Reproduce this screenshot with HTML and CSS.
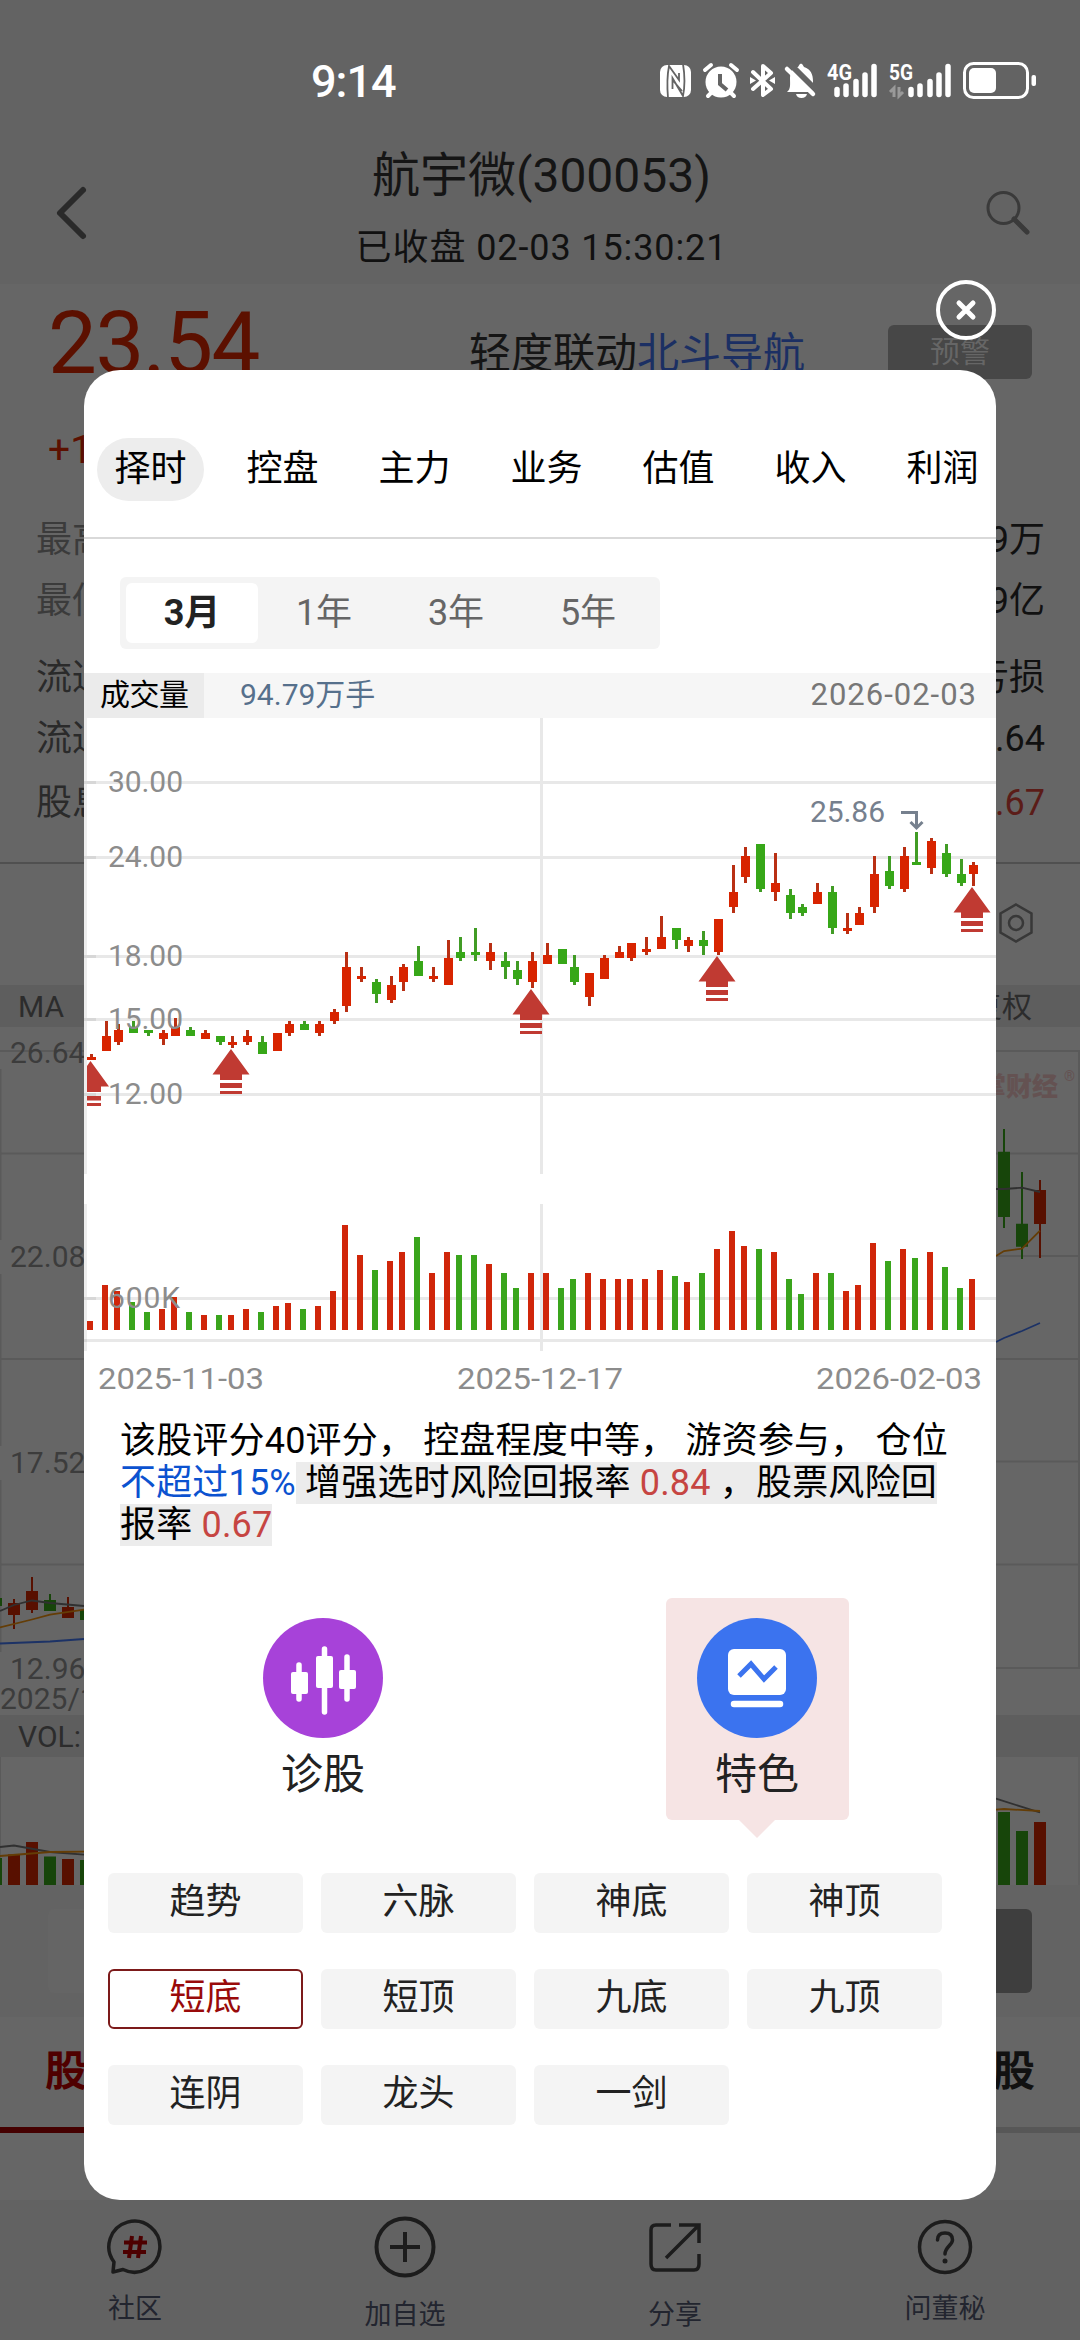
FILE: index.html
```html
<!DOCTYPE html>
<html lang="zh-CN">
<head>
<meta charset="utf-8">
<title>航宇微(300053)</title>
<link rel="stylesheet" href="styles.css">
</head>
<body>
<div class="screen">
  <header class="header">
    <div class="status">
      <span class="clock">9:14</span>
      <svg class="status-icons" viewBox="655 55 390 50" width="390" height="50">
        <rect x="660" y="65" width="31" height="32" rx="7" fill="#fff"/>
        <path d="M668 98C667 86 667 76 669 66L679 80V73M672.500 89V78L683 96C685 86 685 76 683 64M672.500 80L682 91" stroke="#646464" stroke-width="1.800" fill="none"/>
        <circle cx="721" cy="82" r="15.5" fill="#fff"/>
        <path d="M705 70l6-5M737 70l-6-5M711 93l-3 3M731 93l3 3" stroke="#fff" stroke-width="4" stroke-linecap="round"/>
        <path d="M720 74v10l7 6" stroke="#646464" stroke-width="4" fill="none"/>
        <path d="M753 72L771 89L763 95V66L771 73L753 89" stroke="#fff" stroke-width="4" fill="none" stroke-linejoin="round" stroke-linecap="round"/>
        <path d="M750 77l6 3.500-6 3.500zM775 77l-6 3.500 6 3.500z" fill="#fff"/>
        <path d="M787 92C791 89 790 84 790 78C790 69 796 67 798 67Q801 60 804 67C811 69 813 75 813 81C813 87 813 89 814 92ZM796 94h11q-1 4-5.500 4t-5.500-4z" fill="#fff"/>
        <path d="M789 63L817 91" stroke="#646464" stroke-width="6"/>
        <path d="M787 69L813 94" stroke="#fff" stroke-width="4.500" stroke-linecap="round"/>
        <g fill="#fff" class="network"><text x="827" y="80" textLength="25" lengthAdjust="spacingAndGlyphs">4G</text><text x="889" y="80" textLength="24" lengthAdjust="spacingAndGlyphs">5G</text></g>
        <path d="M837 89.500V94.500M846 86V94.500M856 81.500V94.500M865 75V94.500M874 66.500V94.500M911 89.500V94.500M920 86V94.500M930 81.500V94.500M939 75V94.500M948 66.500V94.500" stroke="#fff" stroke-width="5.500" stroke-linecap="round"/>
        <path d="M894 97V88l-4 4M899 87v9l4-4" stroke="#999" stroke-width="3" fill="none"/>
        <rect x="964.500" y="63.500" width="63" height="34" rx="9" fill="none" stroke="#fff" stroke-width="3"/>
        <rect x="969" y="68" width="27" height="25" rx="5" fill="#fff"/>
        <rect x="1031.500" y="75" width="4.500" height="11" rx="2" fill="#fff"/>
      </svg>
    </div>
    <div class="titlebar">
      <svg class="back" width="36" height="60" viewBox="0 0 36 60"><path d="M31 7L8 30L31 53" fill="none" stroke="#2a2a2a" stroke-width="6" stroke-linecap="round" stroke-linejoin="round"/></svg>
      <div class="titles"><div class="name">航宇微(300053)</div><div class="state">已收盘 02-03 15:30:21</div></div>
      <svg class="search" width="46" height="46" viewBox="0 0 46 46"><circle cx="18.500" cy="18" r="15.500" fill="none" stroke="#3a3a3a" stroke-width="3"/><path d="M29 29L42 42" stroke="#3a3a3a" stroke-width="5" stroke-linecap="round"/></svg>
    </div>
  </header>

  <section class="quote">
    <div class="price">23.54</div>
    <div class="linkage">轻度联动<span>北斗导航</span></div>
    <div class="alert">预警</div>
  </section>
  <div class="change">+1</div>
  <section class="stats">
    <div class="stat faint"><span>最高</span><b>9万</b></div>
    <div class="stat faint"><span>最低</span><b>9亿</b></div>
    <div class="stat gap"><span>流通</span><b>亏损</b></div>
    <div class="stat"><span>流通</span><b>.64</b></div>
    <div class="stat tall"><span>股息</span><b class="down">.67</b></div>
  </section>
  <div class="tools">
    <svg width="36" height="42" viewBox="0 0 36 42"><path d="M18 2.500L33.500 11.500V30.500L18 39.500L2.500 30.500V11.500Z" fill="none" stroke="#383838" stroke-width="2.500"/><circle cx="18" cy="21" r="7" fill="none" stroke="#383838" stroke-width="2.500"/></svg>
  </div>
  <div class="band ma"><span>MA</span><span>复权</span></div>
  <svg class="kline" width="1080" height="688" viewBox="0 1027 1080 688">
    <path d="M0 1153.500H1080M100 1256H1080M0 1359H1080M100 1461.500H1080M0 1564.500H1080M100 1668H1080M0 1051H1080M1079 1051V1668M.5 1069V1240M.5 1274V1446M.5 1480V1652" stroke="#5a5a5a" stroke-width="2" fill="none"/>
    <g class="axis"><text x="10" y="1063">26.64</text><text x="10" y="1267">22.08</text><text x="10" y="1473">17.52</text><text x="10" y="1679">12.96</text><text x="0" y="1709">2025/11</text></g>
    <text class="watermark" x="980" y="1096">掌财经</text><text class="reg" x="1064" y="1081">®</text>
    <path d="M0 1598h2v8h-2zM44 1600h12v11h-12zM49 1594h2v6h-2zM80 1610h12v10h-12zM998 1151.700h12V1217h-12zM1003 1129h2v99h-2zM1016 1223.700h12v23h-12zM1021 1172h2v87h-2z" fill="#17450a"/>
    <path d="M8 1603h12v12h-12zM13 1599h2v30h-2zM26 1591h12v19h-12zM31 1577h2v36h-2zM62 1607h12v11h-12zM67 1597h2v10h-2zM1034 1190h12v34h-12zM1039 1180h2v78h-2z" fill="#581000"/>
    <g fill="none" stroke-width="1.800"><path d="M0 1611L14 1605L32 1600.500L50 1603L84 1606M996 1189H1004L1022 1187.700L1040 1192" stroke="#303030"/><path d="M0 1627.500L32 1619.500L50 1614.600L84 1609.700M996 1256L1004 1251L1022 1248.700L1040 1230.700" stroke="#643d06"/><path d="M0 1643.500L50 1641.500L84 1639M996 1342L1004 1338L1022 1331L1040 1323" stroke="#1c3266"/></g>
  </svg>
  <div class="band vol"><span>VOL:</span></div>
  <svg class="kline" width="1080" height="128" viewBox="0 1757 1080 128">
    <path d="M.5 1757V1885M1079 1757V1885" stroke="#5a5a5a"/>
    <path d="M0 1858h2v27h-2zM44 1856.500h12v29h-12zM80 1860h12v25h-12zM998 1812h12v73h-12zM1016 1831h12v54h-12z" fill="#17450a"/>
    <path d="M8 1854.500h12v31h-12zM26 1842h12v43h-12zM62 1859h12v26h-12zM1034 1822h12v63h-12z" fill="#581000"/>
    <g fill="none" stroke-width="1.800"><path d="M0 1847L14 1845.500L50 1852L84 1854.600M996 1798.700L1040 1812.500" stroke="#303030"/><path d="M0 1856L50 1852L84 1851.600M996 1809.700L1004 1809L1040 1811" stroke="#643d06"/></g>
  </svg>
  <div class="trade"><div class="trade-left"></div><div class="trade-right"></div></div>
  <div class="page-tabs"><span class="on">股</span><span>股</span></div>
  <div class="tab-line"><i></i></div>
  <nav class="nav">
    <a class="low"><svg width="62" height="62" viewBox="-31 -31 62 62"><path d="M-21 15A25.500 25.500 0 1 1-12 22.500L-22 25Z" fill="none" stroke="#1c1c1c" stroke-width="3.500" stroke-linejoin="round"/><path d="M-3-11L-6 11M6-11L3 11M-11-4.500H12M-12 5H11" stroke="#4d0000" stroke-width="4"/></svg>社区</a>
    <a><svg width="62" height="62" viewBox="-31 -31 62 62"><circle r="28.500" fill="none" stroke="#1c1c1c" stroke-width="4"/><path d="M0-15V15M-15 0H15" stroke="#1c1c1c" stroke-width="4"/></svg>加自选</a>
    <a><svg width="62" height="62" viewBox="-31 -31 62 62"><path d="M-4-22H-19Q-24-22-24-17V17Q-24 23-19 23H19Q24 23 24 17V7M4-22H24V-4M24-22L-9 11" fill="none" stroke="#1c1c1c" stroke-width="3.500"/></svg>分享</a>
    <a class="low"><svg width="62" height="62" viewBox="-31 -31 62 62"><circle r="25.500" fill="none" stroke="#1c1c1c" stroke-width="3.500"/><path d="M-7.500-7Q-7.500-14 0-14T7.500-7C7.500-2 0 0 0 7" fill="none" stroke="#1c1c1c" stroke-width="3.500" stroke-linecap="round"/><circle cy="14" r="2.500" fill="#1c1c1c"/></svg>问董秘</a>
  </nav>

  <svg class="close" width="60" height="60" viewBox="-30 -30 60 60"><circle r="28" fill="none" stroke="#fff" stroke-width="4"/><path d="M-7-7L7 7M7-7L-7 7" stroke="#fff" stroke-width="5" stroke-linecap="round"/></svg>

  <main class="modal">
    <div class="topics"><span class="on">择时</span><span>控盘</span><span>主力</span><span>业务</span><span>估值</span><span>收入</span><span>利润</span></div>
    <div class="periods"><span class="on">3月</span><span>1年</span><span>3年</span><span>5年</span></div>
    <div class="volume-strip"><span class="label">成交量</span><span class="value">94.79万手</span><time>2026-02-03</time></div>
    <svg class="chart" width="912" height="702" viewBox="84 718 912 702">
      <path d="M84 782.500H996M84 857.500H996M84 956.500H996M84 1019.500H996M84 1094.500H996M84 1298.500H996M84 1340.500H996M541.500 718V1174M541.500 1204V1351" stroke="#000" stroke-opacity=".09" stroke-width="3" fill="none"/>
      <path d="M85.500 718V1174M85.500 1204V1351M87 782.500H96M87 857.500H96M87 956.500H96M87 1019.500H96M87 1094.500H96M87 1298.500H96" stroke="#000" stroke-opacity=".07" stroke-width="3"/>
      <g id="candles"></g>
      <defs><path id="signal" d="M0 0L18.500 25.500H11V31H-11V25.500H-18.500ZM-11 34H11V39H-11ZM-11 42H11V45H-11Z"/></defs>
      <g fill="#c03a32"><path d="M90.500 1061L109 1086.500H101V1092H87V1066ZM87 1096H101V1100.500H87ZM87 1103H101V1106H87Z"/><use href="#signal" x="231" y="1049"/><use href="#signal" x="531" y="989"/><use href="#signal" x="717" y="956"/><use href="#signal" x="972" y="887"/></g>
      <g class="ticks"><text x="108" y="791.500" textLength="75">30.00</text><text x="108" y="866.500" textLength="75">24.00</text><text x="108" y="965.500" textLength="75">18.00</text><text x="108" y="1028.500" textLength="75">15.00</text><text x="108" y="1103.500" textLength="75">12.00</text><text x="108" y="1308" textLength="72">600K</text>
        <text x="98" y="1388.500" textLength="166" lengthAdjust="spacingAndGlyphs">2025-11-03</text><text x="457" y="1388.500" textLength="166" lengthAdjust="spacingAndGlyphs">2025-12-17</text><text x="816" y="1388.500" textLength="166" lengthAdjust="spacingAndGlyphs">2026-02-03</text></g>
      <text class="peak" x="810" y="822" textLength="75">25.86</text>
      <path d="M901 812.500H916.500V828M910.500 822L916.500 828L922.500 822" fill="none" stroke="#76808e" stroke-width="3"/>
    </svg>
    <p class="summary">该股评分40评分， 控盘程度中等， 游资参与， 仓位<br><span class="cap">不超过15%</span><mark> 增强选时风险回报率 <em>0.84</em> ，股票风险回<br>报率 <em>0.67</em></mark></p>
    <div class="features">
      <div class="feature"><svg width="120" height="120" viewBox="-60 -60 120 120"><circle r="60" fill="#a742d9"/><path d="M-24-13V21M1.500-29V34M24-21V21" stroke="#fff" stroke-width="5.500" stroke-linecap="round"/><rect x="-32" y="-6" width="17" height="22" rx="2" fill="#fff"/><rect x="-7" y="-22" width="17" height="32" rx="2" fill="#fff"/><rect x="16" y="-8" width="17" height="19" rx="2" fill="#fff"/></svg>诊股</div>
      <div class="feature on"><svg width="120" height="120" viewBox="-60 -60 120 120"><circle r="60" fill="#3b73ef"/><rect x="-29" y="-29" width="58" height="46" rx="6" fill="#fff"/><path d="M-18-2L-6-14L7 1L19-11" fill="none" stroke="#3b73ef" stroke-width="5"/><path d="M-23 26H23" stroke="#fff" stroke-width="6.500" stroke-linecap="round"/></svg>特色</div>
    </div>
    <div class="signals"><span>趋势</span><span>六脉</span><span>神底</span><span>神顶</span><span class="on">短底</span><span>短顶</span><span>九底</span><span>九顶</span><span>连阴</span><span>龙头</span><span>一剑</span></div>
  </main>
</div>
<script src="chart.js"></script>
</body>
</html>
```
FILE: styles.css
```css
* { box-sizing: border-box; }
body { margin: 0; background: #666; font-family: Roboto, "Noto Sans CJK SC", sans-serif; }
svg { display: block; flex: none; }
.screen { position: relative; width: 1080px; height: 2340px; overflow: hidden; background: #666; display: flex; flex-direction: column; }
.screen > * { flex: none; }

.header { height: 284px; background: #636363; }
.status { height: 142px; display: flex; justify-content: space-between; padding: 55px 35px 0 311px; }
.clock { font-size: 45px; line-height: 53px; font-weight: 500; color: #fff; letter-spacing: -1px; }
.network { font-size: 22px; font-weight: 700; }
.titlebar { height: 142px; display: flex; align-items: flex-start; justify-content: space-between; padding: 0 49px 0 52px; }
.back { margin-top: 41px; }
.search { margin-top: 48px; }
.titles { text-align: center; color: #151515; margin-right: -10px; }
.name { font-size: 48px; line-height: 67px; }
.state { font-size: 36px; line-height: 50px; margin-top: 14px; letter-spacing: .9px; color: #111; }

.quote { height: 128px; display: flex; }
.price { width: 419px; padding-left: 48px; font-size: 87px; line-height: 118px; letter-spacing: -1.5px; color: #5c1000; }
.linkage { width: 419px; padding-left: 50px; font-size: 42px; line-height: 60px; padding-top: 40px; color: #151515; white-space: nowrap; }
.linkage span { color: #1b2f63; }
.alert { margin: 41px 0 0 50px; width: 144px; height: 54px; border-radius: 6px; background: #474747; color: #666; font-size: 30px; line-height: 54px; text-align: center; }
.change { height: 95px; padding-left: 48px; font-size: 39px; line-height: 76px; color: #5c1000; }
.stats { height: 357px; padding: 3px 35px 0 36px; border-bottom: 2px solid #505050; }
.stat { height: 61px; display: flex; justify-content: space-between; font-size: 36px; line-height: 61px; color: #2a2a2a; }
.stat.faint { color: #3b3b3b; }
.stat.gap { margin-top: 16px; }
.stat.tall { line-height: 67px; }
.stat b { font-weight: 400; color: #111; }
.stat .down { color: #5b1c18; }
.tools { height: 121px; display: flex; justify-content: flex-end; padding: 38px 46px 0 0; }
.band { height: 42px; background: #5e5e5e; color: #2c2c2c; font-size: 30px; line-height: 43px; padding: 0 48px 0 18px; display: flex; justify-content: space-between; }
.axis { font-size: 30px; fill: #3c3c3c; }
.watermark { font-size: 26px; font-weight: 900; fill: #645252; }
.reg { font-size: 14px; fill: #645252; }
.trade { height: 132px; background: #636363; padding: 24px 48px; display: flex; justify-content: space-between; }
.trade-left, .trade-right { width: 480px; height: 84px; border-radius: 6px; background: #656565; }
.trade-right { background: #3e3e3e; }
.page-tabs { height: 110px; display: flex; justify-content: space-between; padding: 25px 45px 0; font-size: 42px; line-height: 60px; font-weight: 700; color: #111; }
.page-tabs .on { color: #4f0000; }
.tab-line { height: 6px; background: #575757; }
.tab-line i { display: block; width: 270px; height: 6px; background: #450000; }
.nav { margin-top: 67px; height: 140px; background: #626262; display: grid; grid-template-columns: repeat(4, 1fr); }
.nav a { display: flex; flex-direction: column; align-items: center; padding-top: 16px; font-size: 27px; line-height: 40px; color: #22252f; gap: 17px; }
.nav .low { gap: 11px; }

.close { position: absolute; left: 936px; top: 280px; }
.modal { position: absolute; left: 84px; top: 370px; width: 912px; height: 1830px; background: #fff; border-radius: 36px; overflow: hidden; }
.topics { height: 169px; padding: 68px 0 0 13px; display: flex; gap: 25px; border-bottom: 2px solid #d9d9d9; }
.topics span { flex: none; width: 107px; height: 63px; border-radius: 32px; text-align: center; font-size: 36px; line-height: 62px; color: #000; }
.topics .on { background: #ededed; }
.periods { margin: 38px 0 24px 36px; width: 540px; height: 72px; padding: 6px; border-radius: 6px; background: #f4f4f4; display: grid; grid-template-columns: repeat(4, 132px); text-align: center; font-size: 36px; line-height: 60px; color: #666; }
.periods .on { background: #fff; border-radius: 6px; font-weight: 700; color: #222; }
.volume-strip { height: 45px; background: #f6f6f6; display: flex; font-size: 30px; line-height: 43px; }
.label { width: 120px; padding-left: 16px; background: #ebebeb; color: #000; letter-spacing: -.5px; }
.value { padding-left: 36px; color: #56708c; }
.volume-strip time { margin-left: auto; padding-right: 19px; color: #777; font-size: 31px; letter-spacing: 1px; }
.ticks { font-size: 30px; fill: #8c8c8c; }
.peak { font-size: 30px; fill: #76808e; }
.summary { margin: 0 0 52px 36px; font-size: 36px; line-height: 42px; letter-spacing: .18px; color: #000; white-space: nowrap; }
.cap { color: #0b52d0; }
.summary mark { background: #ececec; color: inherit; padding: 0; line-height: 42px; }
.summary em { font-style: normal; color: #c64542; }
.features { height: 222px; margin: 0 22px 53px; display: grid; grid-template-columns: 1fr 1fr; justify-items: center; }
.feature { position: relative; width: 183px; height: 222px; padding-top: 20px; border-radius: 6px; display: flex; flex-direction: column; align-items: center; font-size: 42px; line-height: 73px; color: #222; }
.feature.on { background: #f6e4e4; }
.feature.on::after { content: ""; position: absolute; top: 222px; left: 73px; border: 18px solid transparent; border-top-color: #f6e4e4; border-bottom: 0; }
.signals { margin-left: 24px; display: grid; grid-template-columns: repeat(4, 195px); gap: 36px 18px; }
.signals span { height: 60px; border-radius: 6px; background: #f4f4f4; text-align: center; font-size: 36px; line-height: 59px; color: #222; }
.signals .on { background: #fff; border: 2px solid #7c1a1a; color: #990a0a; line-height: 55px; }
```
FILE: chart.js
```js
// x, high, low, body top, body bottom, volume top, 1 = rising
const sessions = [
  [91.5,1054,1060,1057,1060,1321,1],[106.5,1021,1051,1036,1051,1285,1],[118.5,1024,1045,1030,1042,1291,1],
  [133.5,1021,1033,1027,1033,1302,0],[148.5,1030,1036,1030,1033,1312,0],[163.5,1030,1045,1033,1039,1309,1],
  [175.5,1018,1036,1027,1036,1297,1],[190.5,1027,1036,1030,1036,1312,0],[205.5,1030,1039,1033,1039,1315,1],
  [220.5,1036,1045,1036,1042,1315,0],[232.5,1036,1048,1042,1045,1315,1],[247.5,1030,1045,1036,1042,1309,1],
  [262.5,1036,1054,1042,1054,1312,0],[277.5,1033,1051,1033,1051,1306,1],[289.5,1021,1036,1024,1033,1303,1],
  [304.5,1021,1030,1024,1030,1309,0],[319.5,1021,1036,1024,1033,1306,1],[334.5,1009,1024,1012,1021,1291,1],
  [346.5,952,1012,967,1006,1225,1],[361.5,967,982,976,979,1255,1],[376.5,979,1003,982,994,1270,0],
  [391.5,976,1003,985,1000,1261,1],[403.5,964,991,967,982,1252,1],[418.5,946,976,961,976,1237,0],
  [433.5,967,982,976,979,1273,1],[448.5,940,985,958,985,1252,1],[460.5,937,961,952,958,1255,0],
  [475.5,928,961,952,955,1255,0],[490.5,943,970,952,961,1264,1],[505.5,952,979,961,967,1273,0],
  [517.5,961,985,970,979,1288,0],[532.5,952,988,961,982,1273,1],[547.5,943,964,955,964,1273,1],
  [562.5,949,964,949,964,1288,0],[574.5,955,985,967,982,1279,0],[589.5,973,1006,973,997,1273,1],
  [604.5,955,979,958,979,1279,1],[619.5,946,958,952,958,1279,1],[631.5,943,961,943,958,1279,1],
  [646.5,937,955,949,952,1279,1],[661.5,916,949,937,949,1270,1],[676.5,928,949,928,940,1276,0],
  [688.5,937,952,940,946,1282,1],[703.5,931,955,940,946,1273,0],[718.5,919,955,919,952,1249,1],
  [733.5,865,913,892,907,1231,1],[745.5,847,883,856,877,1246,1],[760.5,844,892,844,889,1249,0],
  [775.5,853,901,883,892,1252,1],[790.5,889,919,895,913,1279,0],[802.5,904,916,907,913,1294,0],
  [817.5,883,904,892,904,1273,1],[832.5,886,934,892,928,1273,0],[847.5,913,934,928,931,1291,1],
  [859.5,907,925,913,925,1285,1],[874.5,856,913,874,907,1243,1],[889.5,856,889,871,886,1261,0],
  [904.5,847,892,856,889,1249,1],[916.5,832,865,862,865,1258,0],[931.5,838,874,841,868,1252,1],
  [946.5,844,877,853,874,1267,0],[961.5,859,886,874,883,1288,0],[973.5,862,886,865,874,1279,1]
];
const group = document.getElementById("candles");
function bar(x, top, bottom, width, color) {
  const rect = document.createElementNS("http://www.w3.org/2000/svg", "rect");
  const left = Math.max(87, x - width / 2);
  rect.setAttribute("x", left);
  rect.setAttribute("y", top);
  rect.setAttribute("width", x + width / 2 - left);
  rect.setAttribute("height", bottom - top);
  rect.setAttribute("fill", color);
  group.append(rect);
}
for (const [x, high, low, top, bottom, volume, rising] of sessions) {
  bar(x, high, low, 3, rising ? "#b93014" : "#419c25");
  bar(x, top, bottom, 9, rising ? "#d82400" : "#37a718");
  bar(x - 1.5, volume, 1330, 6, rising ? "#d0260a" : "#3aa51c");
}
```
